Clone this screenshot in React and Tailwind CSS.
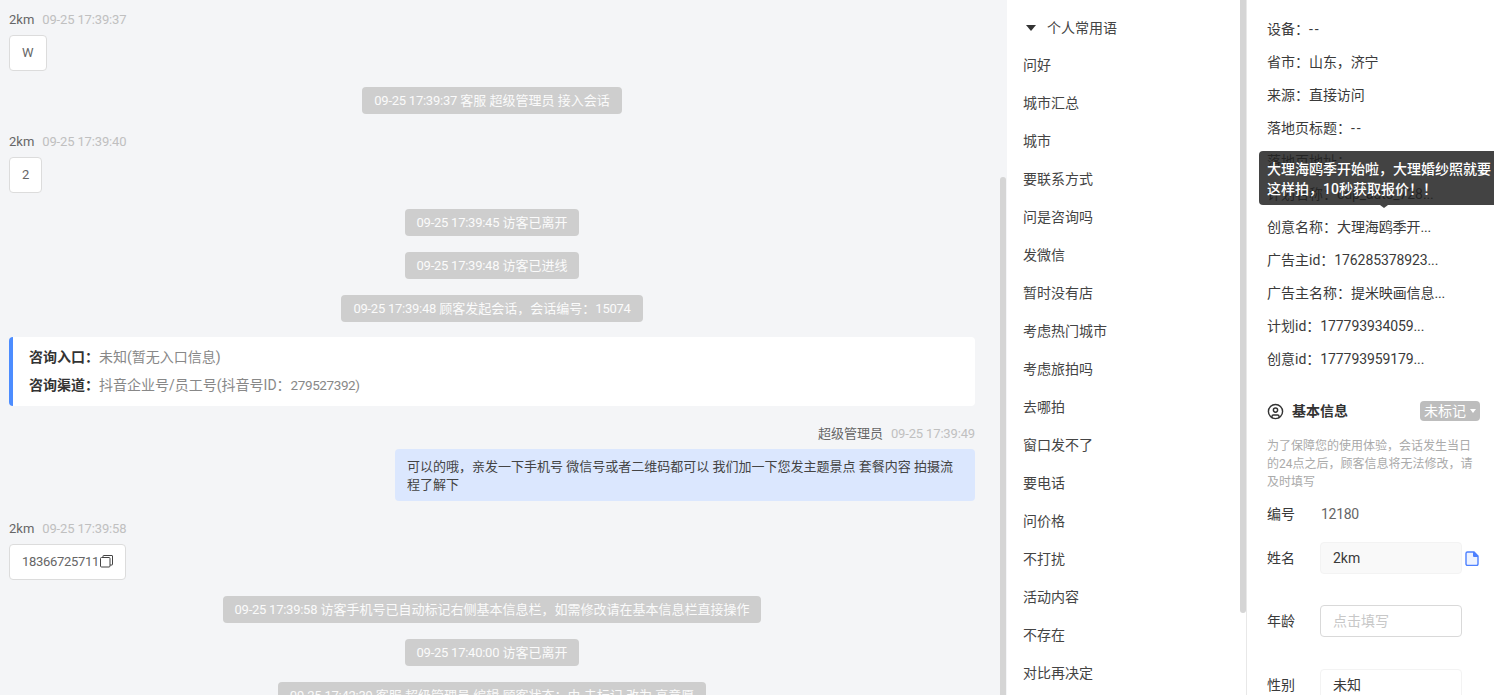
import React from "react";
import { CircleUser } from "lucide-react";

const font = "font-['Roboto','Noto_Sans_CJK_SC',sans-serif]";

function Sys({ time, children, cls = "mb-4" }) {
  return (
    <div className={`flex justify-center ${cls}`}>
      <div className="h-[27px] leading-[27px] px-3 rounded-sm bg-[#cecece] text-[#fbfbfb] text-[13px] whitespace-nowrap">
        <span className="tracking-[-0.25px]">{time}</span> {children}
      </div>
    </div>
  );
}
function Meta({ name, time, right }) {
  return (
    <div className={`flex items-center gap-2 h-5 pt-[2px] text-[13px] ${right ? "justify-end" : ""}`}>
      <span className="text-[#666]">{name}</span>
      <span className="text-[#c0c0c0] tracking-[-0.15px]">{time}</span>
    </div>
  );
}
function Bubble({ children }) {
  return <div className="inline-flex items-center h-9 px-3 mt-1.5 bg-white border border-[#dcdcdc] rounded text-[13px] text-[#666]">{children}</div>;
}
const phrases = ["问好","城市汇总","城市","要联系方式","问是咨询吗","发微信","暂时没有店","考虑热门城市","考虑旅拍吗","去哪拍","窗口发不了","要电话","问价格","不打扰","活动内容","不存在","对比再决定"];
const infos = [["设备","--"],["省市","山东，济宁"],["来源","直接访问"],["落地页标题","--"],["落地页地址",""],["计划名称","cdp_auto_728..."],["创意名称","大理海鸥季开..."],["广告主id","176285378923..."],["广告主名称","提米映画信息..."],["计划id","177793934059..."],["创意id","177793959179..."]];

export default function App() {
  return (
    <div className={`${font} relative flex h-[695px] w-[1494px] overflow-hidden bg-white text-[#444]`}>
      <section className="relative w-[1007px] shrink-0 bg-[#f4f5f7] overflow-hidden pl-[9px] pr-[32px] pt-[9px]">
        <Meta name="2km" time="09-25 17:39:37" />
        <div className="mb-4"><Bubble>W</Bubble></div>
        <Sys time="09-25 17:39:37" cls="mb-[17px]">客服 超级管理员 接入会话</Sys>
        <Meta name="2km" time="09-25 17:39:40" />
        <div className="mb-4"><Bubble>2</Bubble></div>
        <Sys time="09-25 17:39:45">访客已离开</Sys>
        <Sys time="09-25 17:39:48">访客已进线</Sys>
        <Sys time="09-25 17:39:48" cls="mb-[15px]">顾客发起会话，会话编号：<span className="tracking-[-0.25px]">15074</span></Sys>
        <div className="h-[69px] bg-white border-l-4 border-[#4d8dff] rounded-sm pl-4 flex flex-col gap-2 pt-[10px] text-[14px] text-[#888]">
          <div className="leading-5"><b className="text-[#333] font-bold">咨询入口：</b>未知(暂无入口信息)</div>
          <div className="leading-5"><b className="text-[#333] font-bold">咨询渠道：</b>抖音企业号/员工号(抖音号ID：<span className="text-[13.5px] tracking-[-0.4px]">279527392)</span></div>
        </div>
        <div className="h-[17px]" />
        <Meta name="超级管理员" time="09-25 17:39:49" right />
        <div className="flex justify-end mt-1.5 mb-[17px]">
          <div className="w-[580px] h-[52px] bg-[#dbe7fe] rounded px-3 pt-[9px] text-[13px] leading-[18px] text-[#444]">可以的哦，亲发一下手机号 微信号或者二维码都可以 我们加一下您发主题景点 套餐内容 拍摄流程了解下</div>
        </div>
        <Meta name="2km" time="09-25 17:39:58" />
        <div className="mb-4">
          <Bubble><span className="tracking-[-0.3px]">18366725711</span>
            <svg width="13" height="13" viewBox="0 0 13 13" fill="none" stroke="#444" strokeWidth="1" className="-mt-0.5 ml-px"><rect x="0.5" y="2.5" width="9.5" height="9.5" rx="1"/><path d="M3 2.5V1a.5.5 0 0 1 .5-.5H12a.5.5 0 0 1 .5.5v8.5a.5.5 0 0 1-.5.5h-2"/></svg>
          </Bubble>
        </div>
        <Sys time="09-25 17:39:58">访客手机号已自动标记右侧基本信息栏，如需修改请在基本信息栏直接操作</Sys>
        <Sys time="09-25 17:40:00">访客已离开</Sys>
        <Sys time="09-25 17:42:39">客服 超级管理员 编辑 顾客状态：由 未标记 改为 高意愿</Sys>
        <div className="absolute right-[1px] top-[177px] bottom-0 w-[6px] rounded-t bg-[#d5d5d5]" />
      </section>

      <aside className="relative w-[239px] shrink-0 bg-white pl-4 text-[14px] text-[#444]">
        <div className="flex items-center h-[18px] mt-[19px] mb-[9px] ml-[3px]">
          <span className="w-0 h-0 border-x-[5px] border-x-transparent border-t-[6px] border-t-[#333]" />
          <span className="ml-[11px]">个人常用语</span>
        </div>
        {phrases.map((p) => <div key={p} className="h-[38px] leading-[38px]">{p}</div>)}
      </aside>

      <main className="relative flex-1 min-w-0 border-l border-[#e8e8e8] bg-white">
        <div className="pl-5 pr-[14px] pt-[13px] text-[14px] text-[#3a3a3a]">
          {infos.map(([k, v]) => (
            <div key={k} className="h-[33px] leading-[33px] whitespace-nowrap">
              {k}：<span className={v === "--" ? "tracking-[2px]" : "tracking-[-0.1px]"}>{v}</span>
            </div>
          ))}
          <div className="flex items-center justify-between mt-[25px] h-[20px]">
            <div className="flex items-center gap-2 font-bold text-[#333]"><CircleUser size={17} strokeWidth={2} /><span>基本信息</span></div>
            <div className="flex items-center gap-1 h-5 px-1 bg-[#bdbdbd] text-white rounded-sm">未标记<span className="w-0 h-0 border-x-[3px] border-x-transparent border-t-[4px] border-t-white" /></div>
          </div>
          <div className="mt-[16px] text-[12px] leading-[18px] text-[#aaa]">为了保障您的使用体验，会话发生当日的24点之后，顾客信息将无法修改，请及时填写</div>
          <div className="flex items-center h-5 mt-[13px]"><span className="w-[54px]">编号</span><span className="text-[#666] tracking-[-0.3px]">12180</span></div>
          <div className="flex items-center mt-[18px]"><span className="w-[53px]">姓名</span><div className="w-[142px] h-8 leading-[30px] px-3 bg-[#f9f9f9] rounded-sm border border-[#f3f3f3]">2km</div>
            <svg width="14" height="15" viewBox="0 0 14 15" fill="none" className="ml-[3px]"><path d="M1 2.5A1.5 1.5 0 0 1 2.5 1H9l4 4v8a1.5 1.5 0 0 1-1.5 1.5h-9A1.5 1.5 0 0 1 1 13z" fill="#eef3ff" stroke="#4d80ff" strokeWidth="1.4"/><path d="M8 1h1l4 4v1H9a1 1 0 0 1-1-1z" fill="#4d80ff"/></svg>
          </div>
          <div className="flex items-center mt-[31px]"><span className="w-[53px]">年龄</span><div className="w-[142px] h-8 leading-[31px] px-3 border border-[#d9d9d9] rounded-sm text-[#c8c8c8]">点击填写</div></div>
          <div className="flex items-center mt-[32px]"><span className="w-[53px]">性别</span><div className="w-[142px] h-8 leading-[30px] px-3 border border-[#f3f3f3] rounded-sm">未知</div></div>
        </div>
      </main>

      <div className="absolute left-[1240px] top-0 h-[613px] w-[6px] rounded-b bg-[#d5d5d5]" />
      <div className="absolute left-[1259px] top-[151px] w-[235px] h-[54px] pl-2 pt-[8px] bg-[#222]/[.85] text-white text-[14px] font-medium leading-[20px] rounded-l-sm whitespace-nowrap">
        大理海鸥季开始啦，大理婚纱照就要<br />这样拍，10秒获取报价！！
        <span className="absolute left-[121px] -bottom-[3px] w-0 h-0 border-x-[4px] border-x-transparent border-t-[3px] border-t-[#444]" />
      </div>
    </div>
  );
}
